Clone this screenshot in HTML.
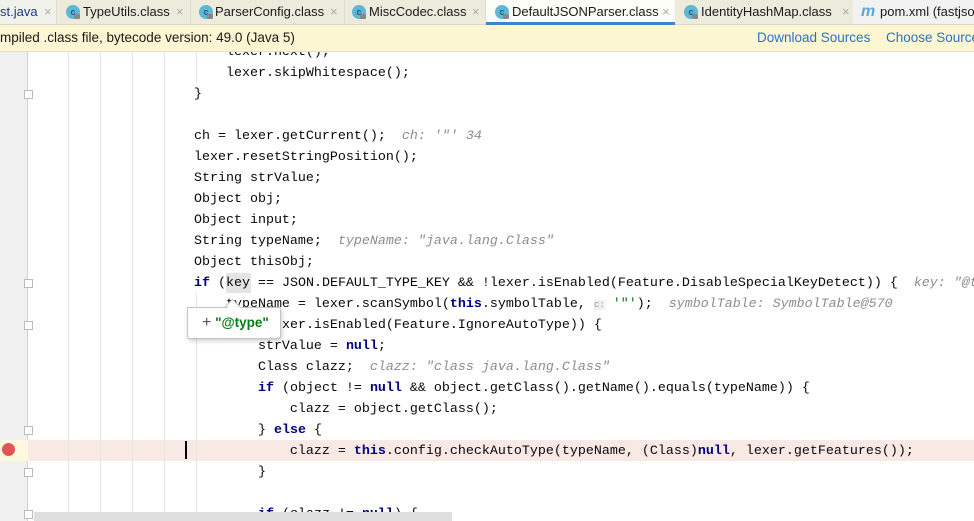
<!DOCTYPE html>
<html><head><meta charset="utf-8"><style>
*{margin:0;padding:0;box-sizing:border-box}
body{width:974px;height:521px;overflow:hidden;background:#fff;position:relative;font-family:"Liberation Sans",sans-serif}
.tabs{position:absolute;left:0;top:0;width:974px;height:25px;background:#ecebdc;border-bottom:1px solid #d6d6cc}
.tab{position:absolute;top:0;height:24px;font-size:13px;color:#1a1a1a;line-height:24px;white-space:nowrap;overflow:hidden}
.tab .x{position:absolute;top:0;color:#aaa;font-size:13px}
.ic{position:absolute;top:5px;width:14px;height:14px;border-radius:50%;background:#5fb7d6;color:#1e5f7a;font-size:9px;line-height:14px;text-align:center;font-weight:bold}
.ic:after{content:"";position:absolute;left:8px;top:9px;width:6px;height:5px;background:#888;border-radius:1px}
.sep{position:absolute;top:0;width:1px;height:24px;background:#dcdccf}
.notif{position:absolute;left:0;top:25px;width:974px;height:27px;background:#fdf6d2;border-bottom:1px solid #e6e0c3;font-size:13.5px;line-height:25px;color:#1a1a1a;white-space:nowrap;overflow:hidden}
.notif a,.notif span{position:absolute;top:0;white-space:nowrap}
.notif a{color:#2e6ec8;text-decoration:none}
.ed{position:absolute;left:0;top:52px;width:974px;height:469px;overflow:hidden}
.gut{position:absolute;left:0;top:0;width:28px;height:469px;background:#f0f0f0;border-right:1px solid #d0d0d0}
.g{position:absolute;top:0;width:1px;height:469px;background:#e6e6e6}
.code{position:absolute;left:2px;top:-10px;font-family:"Liberation Mono",monospace;font-size:13.33px;color:#080808}
.l{height:21px;line-height:21px;position:relative;white-space:pre}
.k{color:#000080;font-weight:bold}
.h{color:#8c8c8c;font-style:italic}
.s{color:#067d17}
.fold{position:absolute;left:24px;width:9px;height:9px;border:1px solid #bbb;background:#fff}
</style></head><body>
<div class="tabs">
 <div class="tab" style="left:0;width:56px;background:#f2f2ec"><span style="color:#1a3b8a">st.java</span><span class="x" style="left:44px">×</span></div>
 <div class="sep" style="left:56px"></div>
 <div class="tab" style="left:66px;width:124px"><span class="ic" style="left:0">c</span><span style="position:absolute;left:17px">TypeUtils.class</span><span class="x" style="left:110px">×</span></div>
 <div class="sep" style="left:190px"></div>
 <div class="tab" style="left:199px;width:145px"><span class="ic" style="left:0">c</span><span style="position:absolute;left:16px">ParserConfig.class</span><span class="x" style="left:131px">×</span></div>
 <div class="sep" style="left:344px"></div>
 <div class="tab" style="left:352px;width:133px"><span class="ic" style="left:0">c</span><span style="position:absolute;left:17px">MiscCodec.class</span><span class="x" style="left:120px">×</span></div>
 <div class="sep" style="left:485px"></div>
 <div class="tab" style="left:486px;width:189px;height:25px;background:#fdfdf7;border-bottom:3px solid #4083c9"><span class="ic" style="left:9px">c</span><span style="position:absolute;left:26px">DefaultJSONParser.class</span><span class="x" style="left:176px">×</span></div>
 <div class="tab" style="left:684px;width:169px"><span class="ic" style="left:0">c</span><span style="position:absolute;left:17px">IdentityHashMap.class</span><span class="x" style="left:158px">×</span></div>
 <div class="tab" style="left:853px;width:121px;background:#f2f2f2"><span style="position:absolute;left:8px;color:#5aa7e0;font-style:italic;font-weight:bold;font-size:16px">m</span><span style="position:absolute;left:27px">pom.xml (fastjso</span></div>
</div>
<div class="notif"><span style="left:0">mpiled .class file, bytecode version: 49.0 (Java 5)</span><a style="left:757px">Download Sources</a><a style="left:886px">Choose Sources</a></div>
<div class="ed">
 <div class="gut"></div>
 <div style="position:absolute;left:0;top:388px;width:28px;height:21px;background:#fdf7e0"></div>
 <div style="position:absolute;left:28px;top:388px;width:946px;height:21px;background:#f8e9e5"></div>
 <div class="g" style="left:68px"></div><div class="g" style="left:100px"></div><div class="g" style="left:132px"></div><div class="g" style="left:164px"></div>
 <div class="g" style="left:196px;height:30px"></div>
 <div class="g" style="left:196px;top:241px;height:228px"></div>
 <div style="position:absolute;left:226px;top:221px;width:25px;height:20px;background:#e4e4e4"></div>
 <div class="fold" style="top:38px"></div>
 <div class="fold" style="top:227px"></div>
 <div class="fold" style="top:269px"></div>
 <div class="fold" style="top:374px"></div>
 <div class="fold" style="top:416px"></div>
 <div class="fold" style="top:458px"></div>
 <div style="position:absolute;left:2px;top:391px;width:13px;height:13px;border-radius:50%;background:#e05555"></div>
 <div style="position:absolute;left:185px;top:389px;width:2px;height:18px;background:#000"></div>
 <div class="code"><div class="l">                            lexer.next();</div><div class="l">                            lexer.skipWhitespace();</div><div class="l">                        }</div><div class="l"> </div><div class="l">                        ch = lexer.getCurrent();  <span class="h">ch: '"' 34</span></div><div class="l">                        lexer.resetStringPosition();</div><div class="l">                        String strValue;</div><div class="l">                        Object obj;</div><div class="l">                        Object input;</div><div class="l">                        String typeName;  <span class="h">typeName: "java.lang.Class"</span></div><div class="l">                        Object thisObj;</div><div class="l">                        <span class="k">if</span> (key == JSON.DEFAULT_TYPE_KEY &amp;&amp; !lexer.isEnabled(Feature.DisableSpecialKeyDetect)) {  <span class="h">key: "@type"</span></div><div class="l">                            typeName = lexer.scanSymbol(<span class="k">this</span>.symbolTable, <span style="font-size:9px;color:#999;background:#f0f0f0">c:</span> <span class="s">'"'</span>);  <span class="h">symbolTable: SymbolTable@570</span></div><div class="l">                            <span class="k">if</span> (!lexer.isEnabled(Feature.IgnoreAutoType)) {</div><div class="l">                                strValue = <span class="k">null</span>;</div><div class="l">                                Class clazz;  <span class="h">clazz: "class java.lang.Class"</span></div><div class="l">                                <span class="k">if</span> (object != <span class="k">null</span> &amp;&amp; object.getClass().getName().equals(typeName)) {</div><div class="l">                                    clazz = object.getClass();</div><div class="l">                                } <span class="k">else</span> {</div><div class="l">                                    clazz = <span class="k">this</span>.config.checkAutoType(typeName, (Class)<span class="k">null</span>, lexer.getFeatures());</div><div class="l">                                }</div><div class="l"> </div><div class="l">                                <span class="k">if</span> (clazz != <span class="k">null</span>) {</div></div>
 <div style="position:absolute;left:227px;top:249px;width:11px;height:11px;background:#fff;border-left:1px solid #c4c4c4;border-top:1px solid #c4c4c4;transform:rotate(45deg)"></div>
 <div style="position:absolute;left:187px;top:255px;width:94px;height:32px;background:#fff;border:1px solid #c4c4c4;border-top-color:transparent;border-radius:3px;box-shadow:1px 2px 5px rgba(0,0,0,.2);font-size:13.5px;line-height:30px;padding-left:14px"><span style="color:#555;font-size:16px">+</span> <span class="s" style="font-weight:bold">"@type"</span></div>
 <div style="position:absolute;left:187px;top:255px;width:94px;height:1px;background:#c4c4c4"></div>
 <div style="position:absolute;left:228px;top:255px;width:12px;height:2px;background:#fff"></div>
 <div style="position:absolute;left:34px;top:460px;width:418px;height:9px;background:#dfdfdf"></div>
</div>
</body></html>
